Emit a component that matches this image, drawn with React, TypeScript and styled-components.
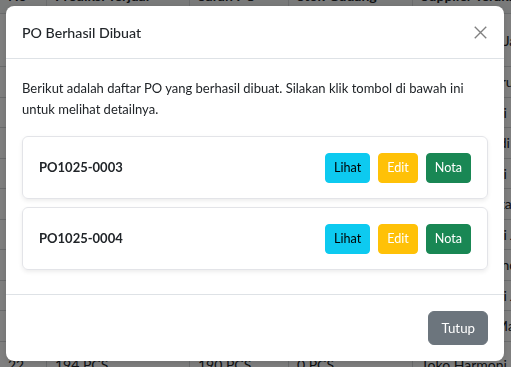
import React from "react";
import styled, { createGlobalStyle } from "styled-components";

const GlobalStyle = createGlobalStyle`
  html, body { margin: 0; padding: 0; }
  body {
    font-family: "Segoe UI", Lato, "Noto Sans", sans-serif;
    font-size: 13px;
    line-height: 1.5;
    color: #212529;
    background: #fff;
    overflow: hidden;
  }
`;

/* ---------- background table ---------- */
const Page = styled.div`
  margin-top: -21px;
`;

const Table = styled.div`
  display: grid;
  grid-template-columns: 46px 143px 99px 124px 200px;
  width: 612px;
`;

const HeadCell = styled.div<{ $first?: boolean }>`
  height: 35px;
  box-sizing: border-box;
  padding: 6px 8px;
  font-weight: 700;
  font-size: 14px;
  border-bottom: 1px solid #d6d8da;
  border-left: ${(p) => (p.$first ? "none" : "1px solid #d6d8da")};
  white-space: nowrap;
  overflow: hidden;
  background: #f3f4f5;
`;

const Cell = styled.div<{ $first?: boolean; $h: number }>`
  height: ${(p) => p.$h}px;
  box-sizing: border-box;
  display: flex;
  align-items: center;
  padding: 0 8px;
  border-bottom: 1px solid #d6d8da;
  border-left: ${(p) => (p.$first ? "none" : "1px solid #d6d8da")};
  white-space: nowrap;
  overflow: hidden;
  font-size: 14px;
`;

/* ---------- modal ---------- */
const Backdrop = styled.div`
  position: fixed;
  inset: 0;
  background: rgba(0, 0, 0, 0.5);
`;

const Dialog = styled.div`
  position: fixed;
  top: 6px;
  left: 6px;
  width: 498px;
  height: 355px;
  box-sizing: border-box;
  background: #fff;
  border-radius: 8px;
  display: flex;
  flex-direction: column;
  overflow: hidden;
  box-shadow: 0 2px 6px rgba(0, 0, 0, 0.12);
`;

const Header = styled.div`
  display: flex;
  align-items: center;
  justify-content: space-between;
  padding: 16px;
  height: 53px;
  box-sizing: border-box;
  border-bottom: 1px solid #dee2e6;
`;

const Title = styled.h5`
  margin: 0;
  font-size: 14.2px;
  font-weight: 500;
  line-height: 21px;
  color: #212529;
`;

const CloseButton = styled.button`
  width: 16px;
  height: 16px;
  padding: 0;
  border: 0;
  background: transparent;
  display: flex;
  align-items: center;
  justify-content: center;
  cursor: pointer;
  color: #808080;
`;

const Body = styled.div`
  flex: 1;
  padding: 19px 16px 0;
`;

const Intro = styled.p`
  margin: 0 0 16px;
  font-size: 13px;
  line-height: 21px;
  color: #212529;
`;

const Card = styled.div`
  display: flex;
  align-items: center;
  justify-content: space-between;
  height: 63px;
  box-sizing: border-box;
  padding: 0 16px;
  margin-bottom: 8px;
  border: 1px solid #e3e4e8;
  border-radius: 6px;
  box-shadow: 0 2px 4px rgba(0, 0, 0, 0.075);
`;

const PoNumber = styled.span`
  font-weight: 700;
  font-size: 13px;
  color: #212529;
`;

const Actions = styled.div`
  display: flex;
  gap: 8px;
`;

const variants = {
  info: { bg: "#0dcaf0", fg: "#000" },
  warning: { bg: "#ffc107", fg: "#fff" },
  success: { bg: "#198754", fg: "#fff" },
};

const SmallButton = styled.button<{ $v: keyof typeof variants }>`
  font-family: inherit;
  font-size: 12.6px;
  line-height: 20px;
  padding: 4px 8px;
  border: 1px solid ${(p) => variants[p.$v].bg};
  background: ${(p) => variants[p.$v].bg};
  color: ${(p) => variants[p.$v].fg};
  border-radius: 4px;
  cursor: pointer;
`;

const Footer = styled.div`
  display: flex;
  justify-content: flex-end;
  align-items: center;
  height: 67px;
  box-sizing: border-box;
  padding: 0 16px;
  border-top: 1px solid #dee2e6;
`;

const CloseFooterButton = styled.button`
  font-family: inherit;
  font-size: 13.3px;
  line-height: 20px;
  padding: 6px 12px;
  border: 1px solid #6c757d;
  background: #6c757d;
  color: #fff;
  border-radius: 6px;
  cursor: pointer;
`;

const rows: { h: number; c: string[] }[] = [
  { h: 53, c: ["12", "212 PCS", "205 PCS", "0 PCS", "Toko Sumber Jaran Makmur"] },
  { h: 30.5, c: ["13", "120 PCS", "110 PCS", "4 PCS", "CV Aneka Baru Sahabat"] },
  { h: 30.5, c: ["14", "98 PCS", "90 PCS", "2 PCS", "Toko Harmoni Marsudi"] },
  { h: 30.5, c: ["15", "85 PCS", "80 PCS", "0 PCS", "PT Sinar Abadi Abdi"] },
  { h: 30.5, c: ["16", "80 PCS", "75 PCS", "0 PCS", "Toko Harmoni"] },
  { h: 30.5, c: ["17", "72 PCS", "70 PCS", "1 PCS", "PT Prima Lestari Jes"] },
  { h: 30.5, c: ["18", "66 PCS", "60 PCS", "0 PCS", "Toko Harmoni Jaya"] },
  { h: 30.5, c: ["19", "60 PCS", "55 PCS", "3 PCS", "CV Karya Mandiri Utama"] },
  { h: 30.5, c: ["20", "58 PCS", "50 PCS", "0 PCS", "Toko Harmoni Jaya"] },
  { h: 30.5, c: ["21", "50 PCS", "45 PCS", "0 PCS", "CV Sentosa Makmur Sakti"] },
  { h: 46, c: ["22", "194 PCS", "190 PCS", "0 PCS", "Toko Harmoni Jaya"] },
];

const poList = ["PO1025-0003", "PO1025-0004"];

function CloseIcon() {
  return (
    <svg width="13" height="13" viewBox="0 0 13 13" fill="none">
      <path d="M0.75 0.75L12.25 12.25M12.25 0.75L0.75 12.25" stroke="currentColor" strokeWidth="1.4" />
    </svg>
  );
}

export default function App() {
  return (
    <>
      <GlobalStyle />
      <Page>
        <Table>
          <HeadCell $first>No</HeadCell>
          <HeadCell>Prediksi Terjual</HeadCell>
          <HeadCell>Saran PO</HeadCell>
          <HeadCell>Stok Gudang</HeadCell>
          <HeadCell>Supplier Terakhir</HeadCell>
          {rows.map((r, i) =>
            r.c.map((c, j) => (
              <Cell key={`${i}-${j}`} $first={j === 0} $h={r.h}>
                {c}
              </Cell>
            ))
          )}
        </Table>
      </Page>
      <Backdrop />
      <Dialog>
        <Header>
          <Title>PO Berhasil Dibuat</Title>
          <CloseButton aria-label="Close">
            <CloseIcon />
          </CloseButton>
        </Header>
        <Body>
          <Intro>
            Berikut adalah daftar PO yang berhasil dibuat. Silakan klik tombol di bawah ini untuk melihat detailnya.
          </Intro>
          {poList.map((po) => (
            <Card key={po}>
              <PoNumber>{po}</PoNumber>
              <Actions>
                <SmallButton $v="info">Lihat</SmallButton>
                <SmallButton $v="warning">Edit</SmallButton>
                <SmallButton $v="success">Nota</SmallButton>
              </Actions>
            </Card>
          ))}
        </Body>
        <Footer>
          <CloseFooterButton>Tutup</CloseFooterButton>
        </Footer>
      </Dialog>
    </>
  );
}
